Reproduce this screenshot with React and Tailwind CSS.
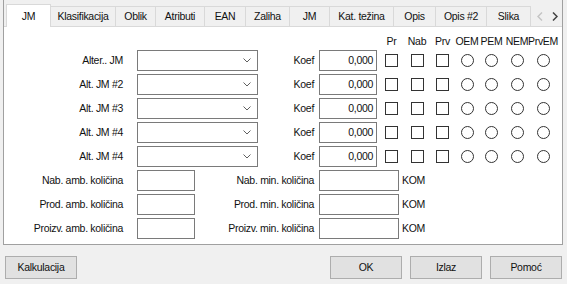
import React from 'react';

const tabs = [
  ['JM', 45], ['Klasifikacija', 65], ['Oblik', 40], ['Atributi', 49], ['EAN', 41], ['Zaliha', 44],
  ['JM', 40], ['Kat. težina', 64], ['Opis', 42], ['Opis #2', 51], ['Slika', 44],
];

const cols = [
  ['Pr', 25, 'box'], ['Nab', 26, 'box'], ['Prv', 25, 'box'],
  ['OEM', 24, 'radio'], ['PEM', 25, 'radio'], ['NEM', 26, 'radio'], ['PrvEM', 26, 'radio'],
];

const jmRows = ['Alter.. JM', 'Alt. JM #2', 'Alt. JM #3', 'Alt. JM #4', 'Alt. JM #4'];

const qtyRows = [
  ['Nab. amb. količina', 'Nab. min. količina'],
  ['Prod. amb. količina', 'Prod. min. količina'],
  ['Proizv. amb. količina', 'Proizv. min. količina'],
];

function Chevron({ color = '#606060' }) {
  return (
    <svg width="8" height="5" viewBox="0 0 8 5" fill="none">
      <path d="M0.5 0.5 L4 4 L7.5 0.5" stroke={color} strokeWidth="1" />
    </svg>
  );
}

function Combo() {
  return (
    <div className="ml-[14px] w-[121px] h-[21px] border border-[#7a7a7a] bg-white flex items-center justify-end pr-[6px]">
      <Chevron />
    </div>
  );
}

function Check() {
  return <div className="w-[13px] h-[13px] border border-[#333333] bg-white" />;
}

function Radio() {
  return <div className="w-[13px] h-[13px] rounded-full border border-[#333333] bg-white" />;
}

function Button({ children }) {
  return (
    <div className="w-[72px] h-[23px] border border-[#adadad] bg-[#e1e1e1] flex items-center justify-center">
      {children}
    </div>
  );
}

export default function App() {
  return (
    <div
      className="w-[567px] h-[284px] bg-[#f0f0f0] text-[10.5px] tracking-[-0.3px] text-[#111] leading-none flex flex-col"
      style={{ fontFamily: 'Tahoma, "Liberation Sans", Arial, sans-serif' }}
    >
      <div className="ml-[3px] mr-[4px] h-[245px] border-l border-r border-b border-[#a0a0a0] flex flex-col">
        {/* tab strip */}
        <div className="h-[26px] flex items-end pl-[2px]">
          {tabs.map(([name, w], i) =>
            i === 0 ? (
              <div
                key={i}
                className="h-[23px] -mb-px relative z-10 bg-white border border-b-0 border-[#d9d9d9] flex items-center justify-center"
                style={{ width: w }}
              >
                {name}
              </div>
            ) : (
              <div
                key={i}
                className="h-[20px] bg-[#f0f0f0] border-t border-r border-[#d9d9d9] flex items-center justify-center"
                style={{ width: w }}
              >
                {name}
              </div>
            )
          )}
          <div className="flex-1 h-[20px] flex items-center justify-end gap-[9px] pr-[4px]">
            <svg width="6" height="9" viewBox="0 0 6 9" fill="none">
              <path d="M5 0.5 L1 4.5 L5 8.5" stroke="#c4c4c4" strokeWidth="1.5" />
            </svg>
            <svg width="6" height="9" viewBox="0 0 6 9" fill="none">
              <path d="M1 0.5 L5 4.5 L1 8.5" stroke="#404040" strokeWidth="1.5" />
            </svg>
          </div>
        </div>

        {/* panel */}
        <div className="flex-1 bg-white border-t border-[#d9d9d9] pt-[8px] flex flex-col gap-[3px]">
          <div className="h-[13px] flex items-center mb-[-1px]">
            <div className="w-[375px]" />
            {cols.map(([label, w]) => (
              <div key={label} className="flex justify-center whitespace-nowrap" style={{ width: w }}>
                {label}
              </div>
            ))}
          </div>

          {jmRows.map((label, r) => (
            <div key={r} className="h-[21px] flex items-center">
              <div className="w-[119px] text-right whitespace-nowrap">{label}</div>
              <Combo />
              <div className="w-[56px] text-right">Koef</div>
              <div className="ml-[5px] w-[58px] h-[21px] border border-[#7a7a7a] flex items-center justify-end pr-[3px]">
                0,000
              </div>
              <div className="ml-[2px] flex items-center">
                {cols.map(([label, w, kind]) => (
                  <div key={label} className="flex justify-center" style={{ width: w }}>
                    {kind === 'box' ? <Check /> : <Radio />}
                  </div>
                ))}
              </div>
            </div>
          ))}

          {qtyRows.map(([a, b], r) => (
            <div key={r} className="h-[21px] flex items-center">
              <div className="w-[119px] text-right whitespace-nowrap">{a}</div>
              <div className="ml-[14px] w-[58px] h-[21px] border border-[#7a7a7a]" />
              <div className="w-[119px] text-right whitespace-nowrap">{b}</div>
              <div className="ml-[5px] w-[80px] h-[21px] border border-[#7a7a7a]" />
              <div className="ml-[3px]">KOM</div>
            </div>
          ))}
        </div>
      </div>

      {/* buttons */}
      <div className="mt-[11px] flex items-center pl-[5px]">
        <Button>Kalkulacija</Button>
        <div className="flex-1" />
        <div className="flex gap-[8px] pr-[5px]">
          <Button>OK</Button>
          <Button>Izlaz</Button>
          <Button>Pomoć</Button>
        </div>
      </div>
    </div>
  );
}
